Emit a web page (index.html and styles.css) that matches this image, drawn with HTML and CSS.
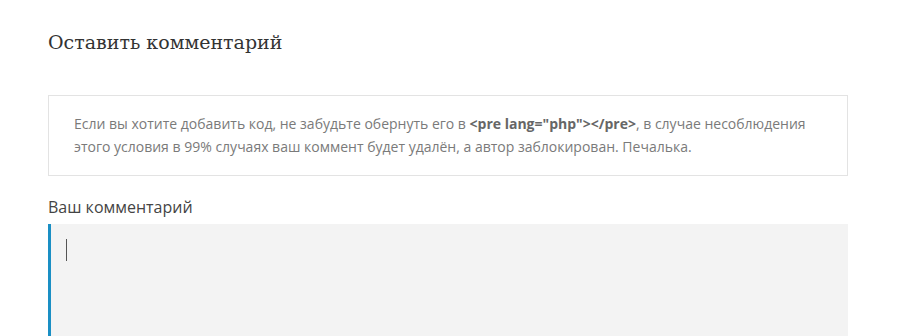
FILE: index.html
```html
<!DOCTYPE html>
<html lang="ru">
<head>
<meta charset="utf-8">
<link rel="stylesheet" href="styles.css">
</head>
<body>
<div class="respond">
  <h3 class="title">Оставить комментарий</h3>
  <div class="notice">Если вы хотите добавить код, не забудьте обернуть его в <b>&lt;pre lang="php"&gt;&lt;/pre&gt;</b>, в случае несоблюдения этого условия в 99% случаях ваш коммент будет удалён, а автор заблокирован. Печалька.</div>
  <label class="label">Ваш комментарий</label>
  <div class="field"><span class="caret"></span></div>
</div>
</body>
</html>
```
FILE: styles.css
```css
html, body { margin: 0; padding: 0; background: #fff; }
.respond { padding: 28px 68px 0 48px; display: flex; flex-direction: column; }
.title {
  margin: 0;
  font-family: "DejaVu Serif", "Liberation Serif", serif;
  font-weight: normal;
  font-size: 19px;
  line-height: 28px;
  color: #333;
}
.notice {
  margin-top: 39px;
  border: 1px solid #e3e3e3;
  padding: 16px 24px 17px 25px;
  font-family: "Open Sans", sans-serif;
  font-size: 14px;
  line-height: 23px;
  color: #7a7a7a;
}
.notice b { color: #666; font-weight: bold; }
.label {
  margin-top: 20px;
  font-family: "Open Sans", sans-serif;
  font-size: 16px;
  line-height: 22px;
  color: #444;
}
.field {
  margin-top: 6px;
  height: 120px;
  background: #f3f3f3;
  border-left: 3px solid #1a8fc4;
  padding: 15px 0 0 15px;
  box-sizing: border-box;
}
.caret { display: block; width: 1px; height: 22px; background: #555; }
```
